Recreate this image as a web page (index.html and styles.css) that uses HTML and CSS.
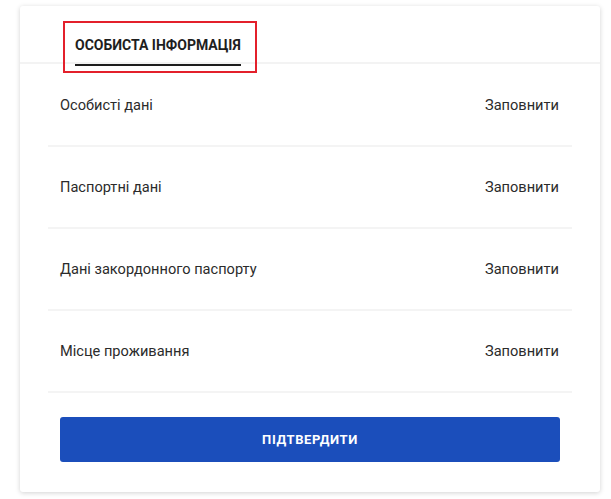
FILE: index.html
```html
<!DOCTYPE html>
<html lang="uk">
<head>
    <meta charset="UTF-8">
    <title>Особиста інформація</title>
    <link rel="stylesheet" href="styles.css">
</head>
<body>
<div class="card">
    <div class="tabs">
        <div class="tab-frame">
            <span class="tab active">Особиста інформація</span>
        </div>
    </div>
    <ul class="rows">
        <li class="row"><span>Особисті дані</span><a class="fill">Заповнити</a></li>
        <li class="row"><span>Паспортні дані</span><a class="fill">Заповнити</a></li>
        <li class="row"><span>Дані закордонного паспорту</span><a class="fill">Заповнити</a></li>
        <li class="row"><span>Місце проживання</span><a class="fill">Заповнити</a></li>
    </ul>
    <div class="actions">
        <button class="btn-primary">Підтвердити</button>
    </div>
</div>
</body>
</html>
```

FILE: styles.css
```css
body { margin: 0; padding: 6px 11px 7px 20px; background: #fff; font-family: Roboto, "Liberation Sans", sans-serif; color: #2b2b2b; }
.card { width: 580px; height: 486px; box-sizing: border-box; background: #fff; border-radius: 3px; box-shadow: 0 1px 5px rgba(0,0,0,0.18); }
.tabs { height: 58px; box-sizing: border-box; border-bottom: 2px solid #f3f3f3; padding: 15px 0 0 43px; }
.tab-frame { display: inline-block; height: 52px; box-sizing: border-box; border: 2px solid #e3202b; padding: 12px 14px 0 10px; position: relative; z-index: 1; }
.tab { display: inline-block; text-transform: uppercase; font-weight: 700; font-size: 14px; color: #1e1e1e; padding-bottom: 11px; border-bottom: 2px solid #1e1e1e; }
.rows { list-style: none; margin: 0; padding: 0 28px; }
.row { height: 82px; box-sizing: border-box; border-bottom: 2px solid #f4f4f4; display: flex; align-items: center; justify-content: space-between; padding: 0 13px 0 12px; font-size: 14.6px; color: #2b2b2b; }
.row:first-child { height: 83px; }
.fill { color: #2b2b2b; cursor: pointer; }
.actions { padding: 24px 40px 0; }
.btn-primary { width: 100%; height: 45px; border: none; border-radius: 3px; background: #1b4ebb; color: #fff; font-family: inherit; font-weight: 700; font-size: 13px; letter-spacing: 0.6px; text-transform: uppercase; }
```
